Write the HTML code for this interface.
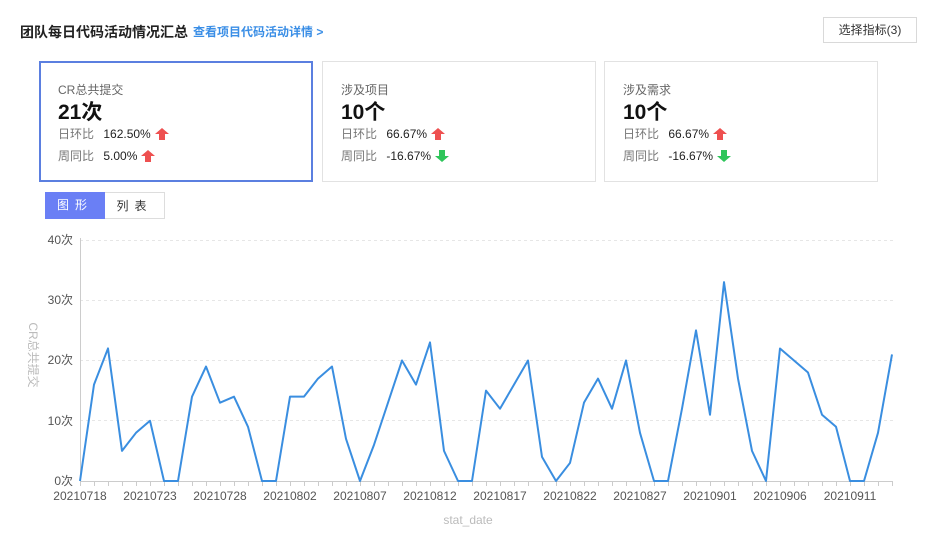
<!DOCTYPE html>
<html><head><meta charset="utf-8"><style>
body{margin:0;width:936px;height:547px;background:#fff;font-family:"Liberation Sans","Noto Sans CJK SC",sans-serif;position:relative;overflow:hidden;color:#222}
.abs{position:absolute}
.title{left:20px;top:22px;font-size:14px;font-weight:bold;color:#222}
.link{left:193px;top:23px;font-size:12px;color:#3a8ee6;font-weight:bold}
.btn{left:823px;top:17px;width:94px;height:26px;border:1px solid #d9d9d9;box-sizing:border-box;font-size:12px;color:#333;text-align:center;line-height:24px}
.card{top:61px;width:274px;height:121px;border:1px solid #e2e2e2;box-sizing:border-box}
.card.sel{border:2px solid #5b7fe0}
.card .lab{position:absolute;left:18px;top:19px;font-size:12px;color:#666}
.card .num{position:absolute;left:18px;top:34px;font-size:21px;font-weight:bold;color:#111}
.card .r{position:absolute;left:18px;font-size:12px;color:#777}
.card .r b{font-weight:normal;color:#222;margin-left:6px}
.up,.dn{display:inline-block;vertical-align:-2px;margin-left:4px}
.tab{top:192px;height:27px;font-size:12px;text-align:center;line-height:27px;box-sizing:border-box;letter-spacing:6px}
</style></head><body>
<div class="abs title">团队每日代码活动情况汇总</div>
<div class="abs link">查看项目代码活动详情 &gt;</div>
<div class="abs btn">选择指标(3)</div>

<div class="abs card sel" style="left:39px">
<div class="lab" style="left:17px;top:18px">CR总共提交</div><div class="num" style="left:17px;top:33px">21次</div>
<div class="r" style="left:17px;top:62px">日环比 <b>162.50%</b><svg class="up" width="14" height="12"><path d="M7 0L14 6H10V12H4V6H0Z" fill="#ee5050"/></svg></div>
<div class="r" style="left:17px;top:84px">周同比 <b>5.00%</b><svg class="up" width="14" height="12"><path d="M7 0L14 6H10V12H4V6H0Z" fill="#ee5050"/></svg></div>
</div>
<div class="abs card" style="left:322px">
<div class="lab">涉及项目</div><div class="num">10个</div>
<div class="r" style="top:63px">日环比 <b>66.67%</b><svg class="up" width="14" height="12"><path d="M7 0L14 6H10V12H4V6H0Z" fill="#ee5050"/></svg></div>
<div class="r" style="top:85px">周同比 <b>-16.67%</b><svg class="dn" width="14" height="12"><path d="M7 12L14 6H10V0H4V6H0Z" fill="#2ec55a"/></svg></div>
</div>
<div class="abs card" style="left:604px">
<div class="lab">涉及需求</div><div class="num">10个</div>
<div class="r" style="top:63px">日环比 <b>66.67%</b><svg class="up" width="14" height="12"><path d="M7 0L14 6H10V12H4V6H0Z" fill="#ee5050"/></svg></div>
<div class="r" style="top:85px">周同比 <b>-16.67%</b><svg class="dn" width="14" height="12"><path d="M7 12L14 6H10V0H4V6H0Z" fill="#2ec55a"/></svg></div>
</div>

<div class="abs tab" style="left:45px;width:60px;background:#6a7ff5;color:#fff">图形</div>
<div class="abs tab" style="left:105px;width:60px;border:1px solid #ddd;border-left:none;color:#333">列表</div>

<svg class="abs" style="left:0;top:0" width="936" height="547">
<g stroke="#e6e6e6" stroke-dasharray="3,3" stroke-width="1">
<line x1="80" y1="240.5" x2="893" y2="240.5"/><line x1="80" y1="300.5" x2="893" y2="300.5"/>
<line x1="80" y1="360.5" x2="893" y2="360.5"/><line x1="80" y1="420.5" x2="893" y2="420.5"/>
</g>
<line x1="80.5" y1="238" x2="80.5" y2="481" stroke="#ccc"/>
<line x1="80" y1="481.5" x2="893" y2="481.5" stroke="#ccc"/>
<g stroke="#ccc">
<path d="M80.5 481v5M94.5 481v5M108.5 481v5M122.5 481v5M136.5 481v5M150.5 481v5M164.5 481v5M178.5 481v5M192.5 481v5M206.5 481v5M220.5 481v5M234.5 481v5M248.5 481v5M262.5 481v5M276.5 481v5M290.5 481v5M304.5 481v5M318.5 481v5M332.5 481v5M346.5 481v5M360.5 481v5M374.5 481v5M388.5 481v5M402.5 481v5M416.5 481v5M430.5 481v5M444.5 481v5M458.5 481v5M472.5 481v5M486.5 481v5M500.5 481v5M514.5 481v5M528.5 481v5M542.5 481v5M556.5 481v5M570.5 481v5M584.5 481v5M598.5 481v5M612.5 481v5M626.5 481v5M640.5 481v5M654.5 481v5M668.5 481v5M682.5 481v5M696.5 481v5M710.5 481v5M724.5 481v5M738.5 481v5M752.5 481v5M766.5 481v5M780.5 481v5M794.5 481v5M808.5 481v5M822.5 481v5M836.5 481v5M850.5 481v5M864.5 481v5M878.5 481v5M892.5 481v5"/>
</g>
<g font-size="12" fill="#555" text-anchor="end" font-family="Liberation Sans,Noto Sans CJK SC,sans-serif">
<text x="73" y="244">40次</text><text x="73" y="304">30次</text><text x="73" y="364">20次</text><text x="73" y="425">10次</text><text x="73" y="485">0次</text>
</g>
<g font-size="12" fill="#555" text-anchor="middle" font-family="Liberation Sans,sans-serif">
<text x="80" y="500">20210718</text><text x="150" y="500">20210723</text><text x="220" y="500">20210728</text><text x="290" y="500">20210802</text><text x="360" y="500">20210807</text><text x="430" y="500">20210812</text><text x="500" y="500">20210817</text><text x="570" y="500">20210822</text><text x="640" y="500">20210827</text><text x="710" y="500">20210901</text><text x="780" y="500">20210906</text><text x="850" y="500">20210911</text>
</g>
<text x="468" y="524" font-size="12" fill="#bbb" text-anchor="middle" font-family="Liberation Sans,sans-serif">stat_date</text>
<text transform="translate(29,355) rotate(90)" font-size="12" fill="#bbb" text-anchor="middle" font-family="Liberation Sans,Noto Sans CJK SC,sans-serif">CR总共提交</text>
<polyline transform="translate(80,481) scale(14,-6.025)" vector-effect="non-scaling-stroke" fill="none" stroke="#3a8ee0" stroke-width="2" stroke-linejoin="round"
points="0,0 1,16 2,22 3,5 4,8 5,10 6,0 7,0 8,14 9,19 10,13 11,14 12,9 13,0 14,0 15,14 16,14 17,17 18,19 19,7 20,0 21,6 22,13 23,20 24,16 25,23 26,5 27,0 28,0 29,15 30,12 31,16 32,20 33,4 34,0 35,3 36,13 37,17 38,12 39,20 40,8 41,0 42,0 43,12 44,25 45,11 46,33 47,17 48,5 49,0 50,22 51,20 52,18 53,11 54,9 55,0 56,0 57,8 58,21"/>
</svg>
</body></html>
